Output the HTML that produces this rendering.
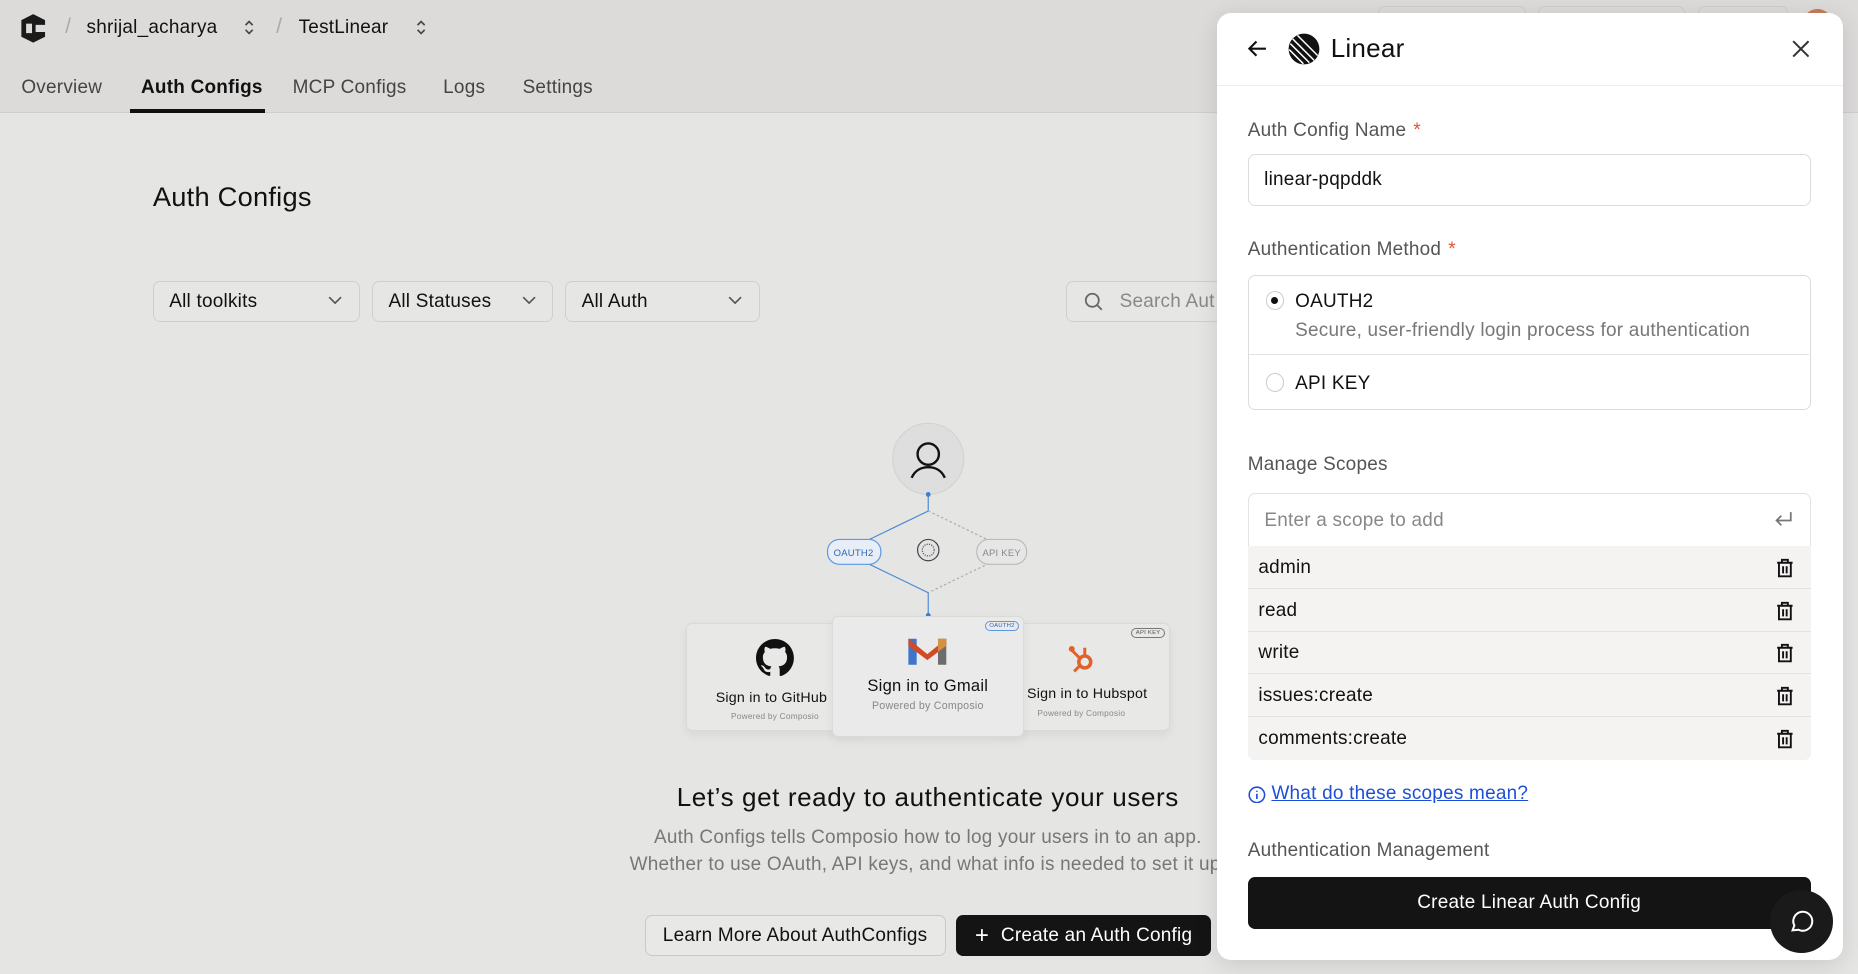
<!DOCTYPE html>
<html><head><meta charset="utf-8"><style>
*{box-sizing:border-box;margin:0;padding:0}
html,body{width:1858px;height:974px;overflow:hidden;background:#e5e5e4}
#w{zoom:1.18495;width:1568px;height:822px;position:relative;font-family:"Liberation Sans",sans-serif;color:#111;background:#e5e5e4;letter-spacing:0.2px}
.a{position:absolute;white-space:nowrap}
.hdr{position:absolute;left:0;top:0;width:1568px;height:95px;background:#dcdbda;border-bottom:1px solid #cfcecd}
.dd{position:absolute;top:237px;height:35px;border:1px solid #d0cfce;border-radius:6px;background:#e6e6e5;font-size:16px;padding:8px 13px}
.dd svg{position:absolute;right:14px;top:12px}
.pn{position:absolute;left:1027px;top:11px;width:528px;height:799px;background:#fff;border-radius:12px;box-shadow:0 4px 20px rgba(0,0,0,.12)}
.lbl{font-size:16px;color:#555}
.lbl b{color:#e5532d;font-weight:normal;margin-left:6px}
.row{position:absolute;left:1053px;width:475px;height:36px;background:#f4f3f2;border-bottom:1px solid #e3e2e1;font-size:16px;padding:9px 9px}
.row svg{position:absolute;right:14px;top:10px}
.card{position:absolute;background:#e8e8e7;border:1px solid #dadad9;border-radius:5px;box-shadow:0 3px 8px rgba(0,0,0,.06);text-align:center}
</style></head><body><div id="w">
<div class="hdr"></div>
<svg class="a" style="left:16px;top:11px" width="24" height="26" viewBox="0 0 24 26"><path d="M12 1 L22 6 V10 H14 V16 H22 V20 L12 25 L2 20 V6Z" fill="#1a1a1a"/><path d="M6 9h5v8H6z" fill="#dcdbda"/></svg>
<div class="a" style="left:55px;top:12px;font-size:18px;color:#aaa">/</div>
<div class="a" style="left:73px;top:14px;font-size:16px">shrijal_acharya</div>
<svg class="a" style="left:204px;top:15px" width="12" height="16" viewBox="0 0 12 16"><path d="M3 6l3-3 3 3M3 10l3 3 3-3" fill="none" stroke="#444" stroke-width="1.4"/></svg>
<div class="a" style="left:233px;top:12px;font-size:18px;color:#aaa">/</div>
<div class="a" style="left:252px;top:14px;font-size:16px">TestLinear</div>
<svg class="a" style="left:349px;top:15px" width="12" height="16" viewBox="0 0 12 16"><path d="M3 6l3-3 3 3M3 10l3 3 3-3" fill="none" stroke="#444" stroke-width="1.4"/></svg>
<div class="a" style="left:1163px;top:5px;width:125px;height:30px;border:1px solid #ccc;border-radius:6px"></div>
<div class="a" style="left:1298px;top:5px;width:124px;height:30px;border:1px solid #ccc;border-radius:6px"></div>
<div class="a" style="left:1433px;top:5px;width:76px;height:30px;border:1px solid #ccc;border-radius:6px"></div>
<div class="a" style="left:1522px;top:8px;width:24px;height:24px;border-radius:50%;background:#c97b5a"></div>
<div class="a" style="left:18px;top:65px;font-size:16px;color:#444">Overview</div>
<div class="a" style="left:119px;top:65px;font-size:16px;color:#111;font-weight:600">Auth Configs</div>
<div class="a" style="left:110px;top:92px;width:114px;height:3px;background:#111"></div>
<div class="a" style="left:247px;top:65px;font-size:16px;color:#444">MCP Configs</div>
<div class="a" style="left:374px;top:65px;font-size:16px;color:#444">Logs</div>
<div class="a" style="left:441px;top:65px;font-size:16px;color:#444">Settings</div>

<div class="a" style="left:129px;top:153px;font-size:23px">Auth Configs</div>
<div class="dd" style="left:129px;width:175px">All toolkits<svg width="12" height="8"><path d="M1 1l5 5 5-5" fill="none" stroke="#555" stroke-width="1.4"/></svg></div>
<div class="dd" style="left:314px;width:153px">All Statuses<svg width="12" height="8"><path d="M1 1l5 5 5-5" fill="none" stroke="#555" stroke-width="1.4"/></svg></div>
<div class="dd" style="left:477px;width:164px">All Auth<svg width="12" height="8"><path d="M1 1l5 5 5-5" fill="none" stroke="#555" stroke-width="1.4"/></svg></div>
<div class="dd" style="left:900px;width:160px;padding-left:44px;color:#888">Search Aut<svg style="left:14px;top:9px" width="16" height="16"><circle cx="7" cy="7" r="5.5" fill="none" stroke="#666" stroke-width="1.5"/><path d="M11 11l4 4" stroke="#666" stroke-width="1.5"/></svg></div>

<svg class="a" style="left:560px;top:350px" width="450" height="280" viewBox="560 350 450 280">
<circle cx="783" cy="387" r="30" fill="#dedede" stroke="#d3d3d3"/>
<circle cx="783" cy="383" r="9" fill="none" stroke="#111" stroke-width="2"/><path d="M769 403c3-7 9-9 14-9s11 2 14 9" fill="none" stroke="#111" stroke-width="2"/>
<path d="M783 417v14l-62 30M721 470l62 30v19" fill="none" stroke="#4a8ad8" stroke-width="1"/>
<path d="M783 431l62 30M845 470l-62 30" fill="none" stroke="#aaa" stroke-dasharray="2 2"/>
<circle cx="783" cy="417" r="2" fill="#3b7fd6"/><circle cx="783" cy="519" r="2" fill="#3b7fd6"/>
<rect x="698" y="455" width="45" height="21" rx="10" fill="#e8eef7" stroke="#5b98de"/><text x="720" y="469" font-size="8" fill="#2d66b8" text-anchor="middle" font-family="Liberation Sans">OAUTH2</text>
<rect x="824" y="455" width="42" height="21" rx="10" fill="#e6e6e6" stroke="#bbb"/><text x="845" y="469" font-size="8" fill="#888" text-anchor="middle" font-family="Liberation Sans">API KEY</text>
<circle cx="783" cy="464" r="9" fill="#e3e3e3" stroke="#444"/><circle cx="783" cy="464" r="5" fill="none" stroke="#555" stroke-dasharray="1 1"/>
</svg>
<div class="card" style="left:579px;top:526px;width:150px;height:91px"><svg style="margin-top:12px" width="32" height="32" viewBox="0 0 16 16"><path fill="#111" d="M8 0C3.58 0 0 3.58 0 8c0 3.54 2.29 6.530 5.47 7.59.4.07.55-.17.55-.38v-1.33c-2.23.48-2.7-1.07-2.7-1.07-.36-.92-.89-1.170-.89-1.17-.73-.5.06-.49.06-.49.8.06 1.23.83 1.23.83.71 1.22 1.87.87 2.33.66.07-.52.28-.87.5-1.07-1.78-.2-3.64-.89-3.64-3.95 0-.87.31-1.59.82-2.15-.08-.2-.36-1.02.08-2.12 0 0 .67-.21 2.2.82a7.6 7.6 0 014 0c1.53-1.04 2.2-.82 2.2-.82.44 1.1.16 1.92.08 2.12.51.56.82 1.27.82 2.15 0 3.07-1.87 3.75-3.65 3.95.29.25.54.73.54 1.48v2.2c0 .21.15.46.55.38A8.01 8.01 0 0016 8c0-4.42-3.58-8-8-8z"/></svg><div style="font-size:12px;margin-top:6px;margin-left:-6px">Sign in to GitHub</div><div style="font-size:7px;color:#888;margin-top:5px">Powered by Composio</div></div>
<div class="card" style="left:838px;top:526px;width:149px;height:91px"><svg style="margin-top:16px" width="24" height="28" viewBox="0 0 24 28"><circle cx="15" cy="16" r="5" fill="none" stroke="#e0622a" stroke-width="3"/><path d="M11 13L4 6M15 11V4M11 19l-5 5" stroke="#e0622a" stroke-width="2.5"/><circle cx="4" cy="5" r="2.5" fill="#e0622a"/></svg><div style="font-size:12px;margin-top:3px;margin-left:10px">Sign in to Hubspot</div><div style="font-size:7px;color:#888;margin-top:5px">Powered by Composio</div><div class="a" style="right:3px;top:3px;font-size:5px;border:1px solid #777;border-radius:5px;padding:1px 3px;color:#555">API KEY</div></div>
<div class="card" style="left:702px;top:520px;width:162px;height:102px;background:#eaeaea"><svg style="margin-top:14px" width="36" height="28" viewBox="0 0 36 28"><path d="M2 4h7v22H2z" fill="#3f74c9"/><path d="M27 4h7v22h-7z" fill="#6d6d6d"/><path d="M2 4l16 13L34 4v6L18 22 2 10z" fill="#d24a26"/><path d="M27 4h7v6l-7 5z" fill="#d49142"/></svg><div style="font-size:14px;margin-top:3px">Sign in to Gmail</div><div style="font-size:9px;color:#888;margin-top:3px">Powered by Composio</div><div class="a" style="right:3px;top:3px;font-size:5px;border:1px solid #5b98de;border-radius:5px;padding:1px 3px;color:#2d66b8">OAUTH2</div></div>

<div class="a" style="left:0;width:1566px;text-align:center;top:660px;font-size:22px;letter-spacing:0.5px">Let’s get ready to authenticate your users</div>
<div class="a" style="left:0;width:1566px;text-align:center;top:695px;font-size:16px;color:#777;line-height:23px">Auth Configs tells Composio how to log your users in to an app.<br>Whether to use OAuth, API keys, and what info is needed to set it up.</div>
<div class="a" style="left:544px;top:772px;width:254px;height:35px;border:1px solid #c8c8c7;border-radius:6px;background:#e8e8e7;font-size:16px;text-align:center;line-height:33px">Learn More About AuthConfigs</div>
<div class="a" style="left:807px;top:772px;width:215px;height:35px;border-radius:6px;background:#141414;color:#fff;font-size:16px;text-align:center;line-height:35px"><span style="font-size:20px;vertical-align:-2px;margin-right:10px">+</span>Create an Auth Config</div>

<div class="pn"></div>
<svg class="a" style="left:1052px;top:32px" width="18" height="18" viewBox="0 0 18 18"><path d="M16 9H3M8 3L2 9l6 6" fill="none" stroke="#111" stroke-width="1.8"/></svg>
<svg class="a" style="left:1087px;top:28px" width="27" height="27" viewBox="0 0 27 27"><circle cx="13.5" cy="13.5" r="13" fill="#111"/><path d="M2 9l16 16M1 14l12 12M4 5l18 18M8 2l17 17" stroke="#fff" stroke-width="1.3"/></svg>
<div class="a" style="left:1123px;top:28px;font-size:22px">Linear</div>
<svg class="a" style="left:1512px;top:34px" width="15" height="15"><path d="M1 1l13 13M14 1L1 14" stroke="#333" stroke-width="1.7"/></svg>
<div class="a" style="left:1027px;top:72px;width:528px;height:1px;background:#eee"></div>
<div class="a lbl" style="left:1053px;top:101px">Auth Config Name<b>*</b></div>
<div class="a" style="left:1053px;top:130px;width:475px;height:44px;border:1px solid #dcdcdc;border-radius:6px;font-size:16px;padding:12px 13px">linear-pqpddk</div>
<div class="a lbl" style="left:1053px;top:202px">Authentication Method<b>*</b></div>
<div class="a" style="left:1053px;top:232px;width:475px;height:114px;border:1px solid #dcdcdc;border-radius:6px"></div>
<div class="a" style="left:1054px;top:299px;width:473px;height:1px;background:#e3e3e3"></div>
<div class="a" style="left:1068px;top:246px;width:16px;height:16px;border-radius:50%;border:1px solid #ccc"><div style="width:6px;height:6px;border-radius:50%;background:#111;margin:4px"></div></div>
<div class="a" style="left:1093px;top:246px;font-size:16px">OAUTH2</div>
<div class="a" style="left:1093px;top:270px;font-size:16px;color:#777">Secure, user-friendly login process for authentication</div>
<div class="a" style="left:1068px;top:315px;width:16px;height:16px;border-radius:50%;border:1px solid #ccc"></div>
<div class="a" style="left:1093px;top:315px;font-size:16px">API KEY</div>
<div class="a lbl" style="left:1053px;top:383px">Manage Scopes</div>
<div class="a" style="left:1053px;top:416px;width:475px;height:225px;border:1px solid #e3e3e3;border-radius:6px;overflow:hidden"></div>
<div class="a" style="left:1067px;top:430px;font-size:16px;color:#888">Enter a scope to add</div>
<svg class="a" style="left:1496px;top:431px" width="18" height="16"><path d="M15 1v7H3M7 4L3 8l4 4" fill="none" stroke="#777" stroke-width="1.5"/></svg>
<div class="row" style="top:461px">admin<svg width="15" height="17" viewBox="0 0 15 17"><path d="M1 4h13M5 4V1.5h5V4M2.5 4v11.5h10V4M6 7v6M9 7v6" fill="none" stroke="#111" stroke-width="1.6"/></svg></div>
<div class="row" style="top:497px">read<svg width="15" height="17" viewBox="0 0 15 17"><path d="M1 4h13M5 4V1.5h5V4M2.5 4v11.5h10V4M6 7v6M9 7v6" fill="none" stroke="#111" stroke-width="1.6"/></svg></div>
<div class="row" style="top:533px">write<svg width="15" height="17" viewBox="0 0 15 17"><path d="M1 4h13M5 4V1.5h5V4M2.5 4v11.5h10V4M6 7v6M9 7v6" fill="none" stroke="#111" stroke-width="1.6"/></svg></div>
<div class="row" style="top:569px">issues:create<svg width="15" height="17" viewBox="0 0 15 17"><path d="M1 4h13M5 4V1.5h5V4M2.5 4v11.5h10V4M6 7v6M9 7v6" fill="none" stroke="#111" stroke-width="1.6"/></svg></div>
<div class="row" style="top:605px;border-bottom:none;border-radius:0 0 6px 6px">comments:create<svg width="15" height="17" viewBox="0 0 15 17"><path d="M1 4h13M5 4V1.5h5V4M2.5 4v11.5h10V4M6 7v6M9 7v6" fill="none" stroke="#111" stroke-width="1.6"/></svg></div>
<svg class="a" style="left:1053px;top:663px" width="15" height="15"><circle cx="7.5" cy="7.5" r="6.5" fill="none" stroke="#1d4ed8" stroke-width="1.3"/><path d="M7.5 6.5v4.5M7.5 4v1" stroke="#1d4ed8" stroke-width="1.4"/></svg>
<div class="a" style="left:1073px;top:661px;font-size:16px;color:#1d4ed8;text-decoration:underline">What do these scopes mean?</div>
<div class="a lbl" style="left:1053px;top:709px">Authentication Management</div>
<div class="a" style="left:1053px;top:740px;width:475px;height:44px;border-radius:6px;background:#141414;color:#fff;font-size:16px;text-align:center;line-height:44px">Create Linear Auth Config</div>
<div class="a" style="left:1494px;top:751px;width:53px;height:53px;border-radius:50%;background:#1a1a1a"></div>
<svg class="a" style="left:1510px;top:767px" width="21" height="21" viewBox="0 0 21 21"><path d="M3 18l1.5-4A8 8 0 1 1 8 17.5z" fill="none" stroke="#fff" stroke-width="1.7"/></svg>
</div></body></html>
